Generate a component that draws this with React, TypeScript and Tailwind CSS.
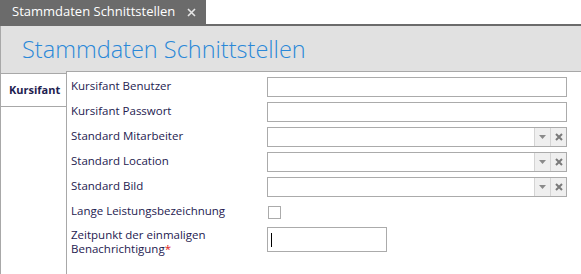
const font = { fontFamily: '"Segoe UI", "Open Sans", "Noto Sans", sans-serif' };

function TextField() {
  return <div className="h-[20px] w-[300px] border border-[#ababab] bg-white" />;
}

function ComboField() {
  return (
    <div className="flex h-[20px] w-[300px] border border-[#ababab] bg-white">
      <div className="flex-1" />
      <div className="flex w-[16px] items-center justify-center border-l border-[#d4d4d4] bg-[#efefef]">
        <svg width="7" height="4" viewBox="0 0 7 4">
          <path d="M0 0h7L3.5 4z" fill="#8a8a8a" />
        </svg>
      </div>
      <div className="flex w-[16px] items-center justify-center border-l border-[#d4d4d4] bg-[#efefef]">
        <svg width="8" height="8" viewBox="0 0 8 8">
          <path d="M1 1l6 6M7 1L1 7" stroke="#7a7a7a" strokeWidth="2" />
        </svg>
      </div>
    </div>
  );
}

function Row({ label, children }: { label: React.ReactNode; children: React.ReactNode }) {
  return (
    <div className="flex h-[20px] items-center">
      <div className="w-[196px] whitespace-nowrap pb-[2px] text-[11.5px] text-[#1e2150]">{label}</div>
      {children}
    </div>
  );
}

export default function App() {
  return (
    <div className="flex h-[274px] w-[581px] flex-col overflow-hidden bg-white" style={font}>
      <div className="flex h-[26px] border-b-2 border-[#6b6b6b]">
        <div className="flex w-[206px] items-center whitespace-nowrap bg-[#6b6b6b] pl-[12px] pr-[10px] text-[13px] text-white">
          <span className="flex-1">Stammdaten Schnittstellen</span>
          <svg width="9" height="9" viewBox="0 0 9 9">
            <path d="M1 1l7 7M8 1L1 8" stroke="#e6e6e6" strokeWidth="1.6" />
          </svg>
        </div>
      </div>

      <div className="flex h-[45px] items-center border-l border-[#a8a8a8] bg-[#e1e1e1] pl-[21px]">
        <h1 className="whitespace-nowrap pt-[2px] text-[23.5px] font-light text-[#2a88d8]">Stammdaten Schnittstellen</h1>
      </div>

      <div className="flex flex-1">
        <div className="flex w-[66px] flex-col border-l border-[#a8a8a8]">
          <div className="h-[2px] bg-[#e1e1e1]" />
          <div className="flex h-[34px] items-center border-y border-[#a8a8a8] bg-white pl-[8px] text-[11px] font-bold text-[#1e2150]">
            Kursifant
          </div>
          <div className="flex-1 bg-white" />
        </div>

        <div className="flex flex-1 flex-col gap-[5px] border-l border-t border-[#a8a8a8] pl-[4px] pt-[5px]">
          <Row label="Kursifant Benutzer">
            <TextField />
          </Row>
          <Row label="Kursifant Passwort">
            <TextField />
          </Row>
          <Row label="Standard Mitarbeiter">
            <ComboField />
          </Row>
          <Row label="Standard Location">
            <ComboField />
          </Row>
          <Row label="Standard Bild">
            <ComboField />
          </Row>
          <Row label="Lange Leistungsbezeichnung">
            <div className="ml-[1px] h-[13px] w-[13px] border border-[#ababab] bg-white" />
          </Row>
          <div className="flex items-start">
            <div className="w-[196px] pt-[1px] text-[11.5px] leading-[14px] text-[#1e2150]">
              Zeitpunkt der einmaligen
              <br />
              Benachrichtigung<span className="text-[#e02020]">*</span>
            </div>
            <div className="flex h-[25px] w-[120px] items-center border border-[#ababab] bg-white pl-[3px]">
              <div className="h-[14px] w-px bg-black" />
            </div>
          </div>
        </div>
      </div>
    </div>
  );
}
